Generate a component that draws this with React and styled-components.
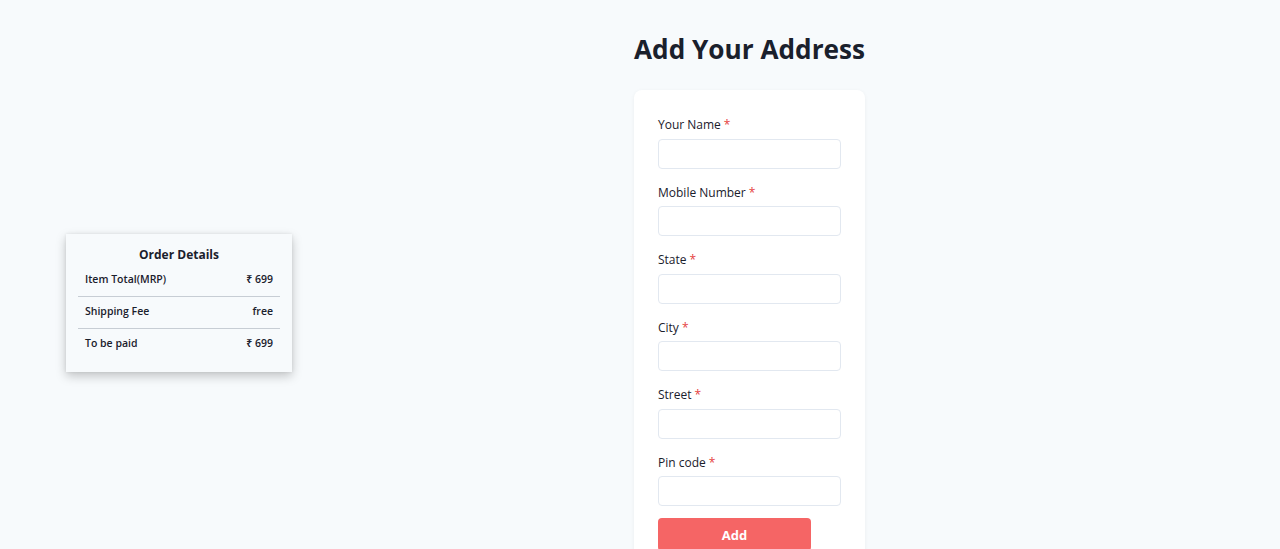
import React from "react";
import styled, { createGlobalStyle } from "styled-components";

const Global = createGlobalStyle`
  html, body { margin: 0; padding: 0; background: #f7fafc; }
  body { font-family: "Open Sans", "Noto Sans", sans-serif; color: #1a202c; }
  * { box-sizing: border-box; }
`;

const Page = styled.div`
  display: flex;
  align-items: flex-start;
  padding: 0 0 32px 66px;
  min-height: 549px;
`;

const Summary = styled.div`
  margin-top: 234px;
  width: 226px;
  padding: 11px 12px 12px;
  background: #f7fafc;
  box-shadow: 0 4px 10px rgba(0, 0, 0, 0.22), 0 0 3px rgba(0, 0, 0, 0.08);
`;

const SummaryTitle = styled.h3`
  margin: 0;
  text-align: center;
  font-size: 12px;
  font-weight: 700;
  line-height: 20px;
`;

const Row = styled.div`
  display: flex;
  justify-content: space-between;
  padding: 4px 7px 7px;
  font-size: 10.5px;
  font-weight: 600;
  line-height: 20px;
  border-bottom: ${(p) => (p.$last ? "none" : "1px solid #c7cdd4")};
`;

const Column = styled.div`
  margin-left: 342px;
  width: 231px;
  display: flex;
  flex-direction: column;
  padding-top: 29px;
`;

const Title = styled.h1`
  margin: 0 0 21px;
  font-size: 26.2px;
  font-weight: 700;
  line-height: 40px;
  white-space: nowrap;
  color: #1a202c;
`;

const Card = styled.form`
  background: #fff;
  border-radius: 8px;
  padding: 25px 24px 24px;
  box-shadow: 0 1px 4px rgba(0, 0, 0, 0.05);
`;

const Field = styled.div`
  display: flex;
  flex-direction: column;
  margin-bottom: 14px;
`;

const Label = styled.label`
  font-size: 12px;
  line-height: 19.5px;
  margin-bottom: 4px;
  color: #1a202c;
`;

const Star = styled.span`
  color: #e53e3e;
  margin-left: 3px;
`;

const Input = styled.input`
  height: 30px;
  width: 100%;
  border: 1px solid #e2e8f0;
  border-radius: 4px;
  background: #fff;
  outline: none;
`;

const Button = styled.button`
  margin-top: -2px;
  width: 153px;
  height: 33px;
  border: none;
  border-radius: 4px;
  background: #f56565;
  color: #fff;
  font-family: inherit;
  font-size: 13px;
  font-weight: 700;
`;

const fields = ["Your Name", "Mobile Number", "State", "City", "Street", "Pin code"];

export default function App() {
  return (
    <>
      <Global />
      <Page>
        <Summary>
          <SummaryTitle>Order Details</SummaryTitle>
          <Row><span>Item Total(MRP)</span><span>₹ 699</span></Row>
          <Row><span>Shipping Fee</span><span>free</span></Row>
          <Row $last><span>To be paid</span><span>₹ 699</span></Row>
        </Summary>
        <Column>
          <Title>Add Your Address</Title>
          <Card onSubmit={(e) => e.preventDefault()}>
            {fields.map((f) => (
              <Field key={f}>
                <Label>{f}<Star>*</Star></Label>
                <Input type="text" />
              </Field>
            ))}
            <Button type="submit">Add</Button>
          </Card>
        </Column>
      </Page>
    </>
  );
}
